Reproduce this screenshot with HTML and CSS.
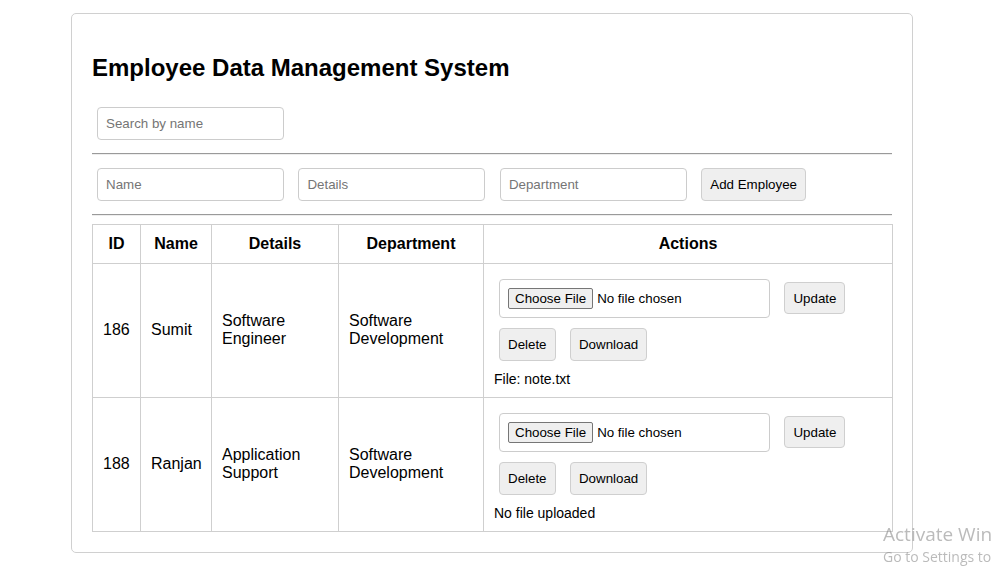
FILE: index.html
```html
<!DOCTYPE html>
<html lang="en">
<head>
<meta charset="utf-8">
<title>Employee Data Management System</title>
<link rel="stylesheet" href="styles.css">
</head>
<body>
<div class="container">
  <h2 class="title">Employee Data Management System</h2>
  <div class="row">
    <input class="field" type="text" placeholder="Search by name">
  </div>
  <hr class="rule">
  <div class="row">
    <input class="field" type="text" placeholder="Name">
    <input class="field" type="text" placeholder="Details">
    <input class="field" type="text" placeholder="Department">
    <button class="btn" type="button">Add Employee</button>
  </div>
  <hr class="rule">
  <table class="grid">
    <colgroup>
      <col class="c-id"><col class="c-name"><col class="c-details"><col class="c-dept"><col class="c-actions">
    </colgroup>
    <thead>
      <tr><th>ID</th><th>Name</th><th>Details</th><th>Department</th><th>Actions</th></tr>
    </thead>
    <tbody>
      <tr>
        <td>186</td>
        <td>Sumit</td>
        <td>Software Engineer</td>
        <td>Software Development</td>
        <td class="actions">
          <div class="action-row">
            <input class="file" type="file">
            <button class="btn btn-update" type="button">Update</button>
            <button class="btn" type="button">Delete</button>
            <button class="btn" type="button">Download</button>
          </div>
          <p class="file-note">File: note.txt</p>
        </td>
      </tr>
      <tr>
        <td>188</td>
        <td>Ranjan</td>
        <td>Application Support</td>
        <td>Software Development</td>
        <td class="actions">
          <div class="action-row">
            <input class="file" type="file">
            <button class="btn btn-update" type="button">Update</button>
            <button class="btn" type="button">Delete</button>
            <button class="btn" type="button">Download</button>
          </div>
          <p class="file-note">No file uploaded</p>
        </td>
      </tr>
    </tbody>
  </table>
</div>
<div class="watermark">
  <div class="wm-big">Activate Win</div>
  <div class="wm-small">Go to Settings to</div>
</div>
</body>
</html>
```

FILE: styles.css
```css
html, body {
  margin: 0;
  padding: 0;
  background: #fff;
}
body {
  font-family: "Liberation Sans", Arial, sans-serif;
  font-size: 16px;
  color: #000;
}
.container {
  width: 800px;
  margin: 13px 0 0 71px;
  padding: 20px;
  border: 1px solid #d0d0d0;
  border-radius: 5px;
}
.title {
  font-size: 24px;
  font-weight: bold;
  margin: 19.92px 0;
}
.row {
  display: flex;
  align-items: center;
  gap: 4.45px;
}
.field {
  box-sizing: border-box;
  width: 187px;
  height: 33px;
  margin: 5px;
  padding: 8px;
  border: 1px solid #ccc;
  border-radius: 4px;
  font-family: "Liberation Sans", Arial, sans-serif;
  font-size: 13.33px;
  color: #000;
  outline: none;
}
.field::placeholder {
  color: #757575;
}
.rule {
  margin: 8px 0;
  border: 0;
  border-top: 1px solid #9a9a9a;
  border-bottom: 1px solid #eeeeee;
  height: 0;
}
.btn {
  box-sizing: border-box;
  height: 33px;
  margin: 5px;
  padding: 0 8px;
  border: 1px solid #cfcfcf;
  border-radius: 4px;
  background: #efefef;
  font-family: "Liberation Sans", Arial, sans-serif;
  font-size: 13.33px;
  color: #000;
}
.btn-update {
  height: 32px;
}
.grid {
  width: 800px;
  border-collapse: collapse;
  table-layout: fixed;
}
.c-id { width: 48px; }
.c-name { width: 71px; }
.c-details { width: 127px; }
.c-dept { width: 145px; }
.c-actions { width: 409px; }
.grid th, .grid td {
  border: 1px solid #cfcfcf;
  padding: 10px;
  vertical-align: middle;
}
.grid th {
  font-weight: bold;
  text-align: center;
}
.grid td {
  text-align: left;
}
.action-row {
  display: flex;
  flex-wrap: wrap;
  align-items: center;
  column-gap: 4.45px;
}
.file {
  box-sizing: border-box;
  width: 271px;
  height: 39px;
  margin: 5px;
  padding: 8px;
  border: 1px solid #ccc;
  border-radius: 4px;
  font-family: "Liberation Sans", Arial, sans-serif;
  font-size: 13.33px;
  color: #000;
}
.file::file-selector-button {
  font-family: "Liberation Sans", Arial, sans-serif;
  font-size: 13.33px;
  height: 21px;
  padding: 1px 6px;
  margin-right: 4px;
  border: 1px solid #767676;
  border-radius: 2px;
  background: #efefef;
  color: #000;
}
.file-note {
  margin: 5px 0 0;
  font-size: 14px;
}
.watermark {
  position: fixed;
  left: 883px;
  right: 0;
  top: 522px;
  white-space: nowrap;
  font-family: "Open Sans", "Noto Sans", sans-serif;
  color: rgba(120, 120, 120, 0.5);
  pointer-events: none;
}
.wm-big {
  font-size: 19px;
  line-height: 25px;
}
.wm-small {
  font-size: 14px;
  line-height: 20px;
}
```
